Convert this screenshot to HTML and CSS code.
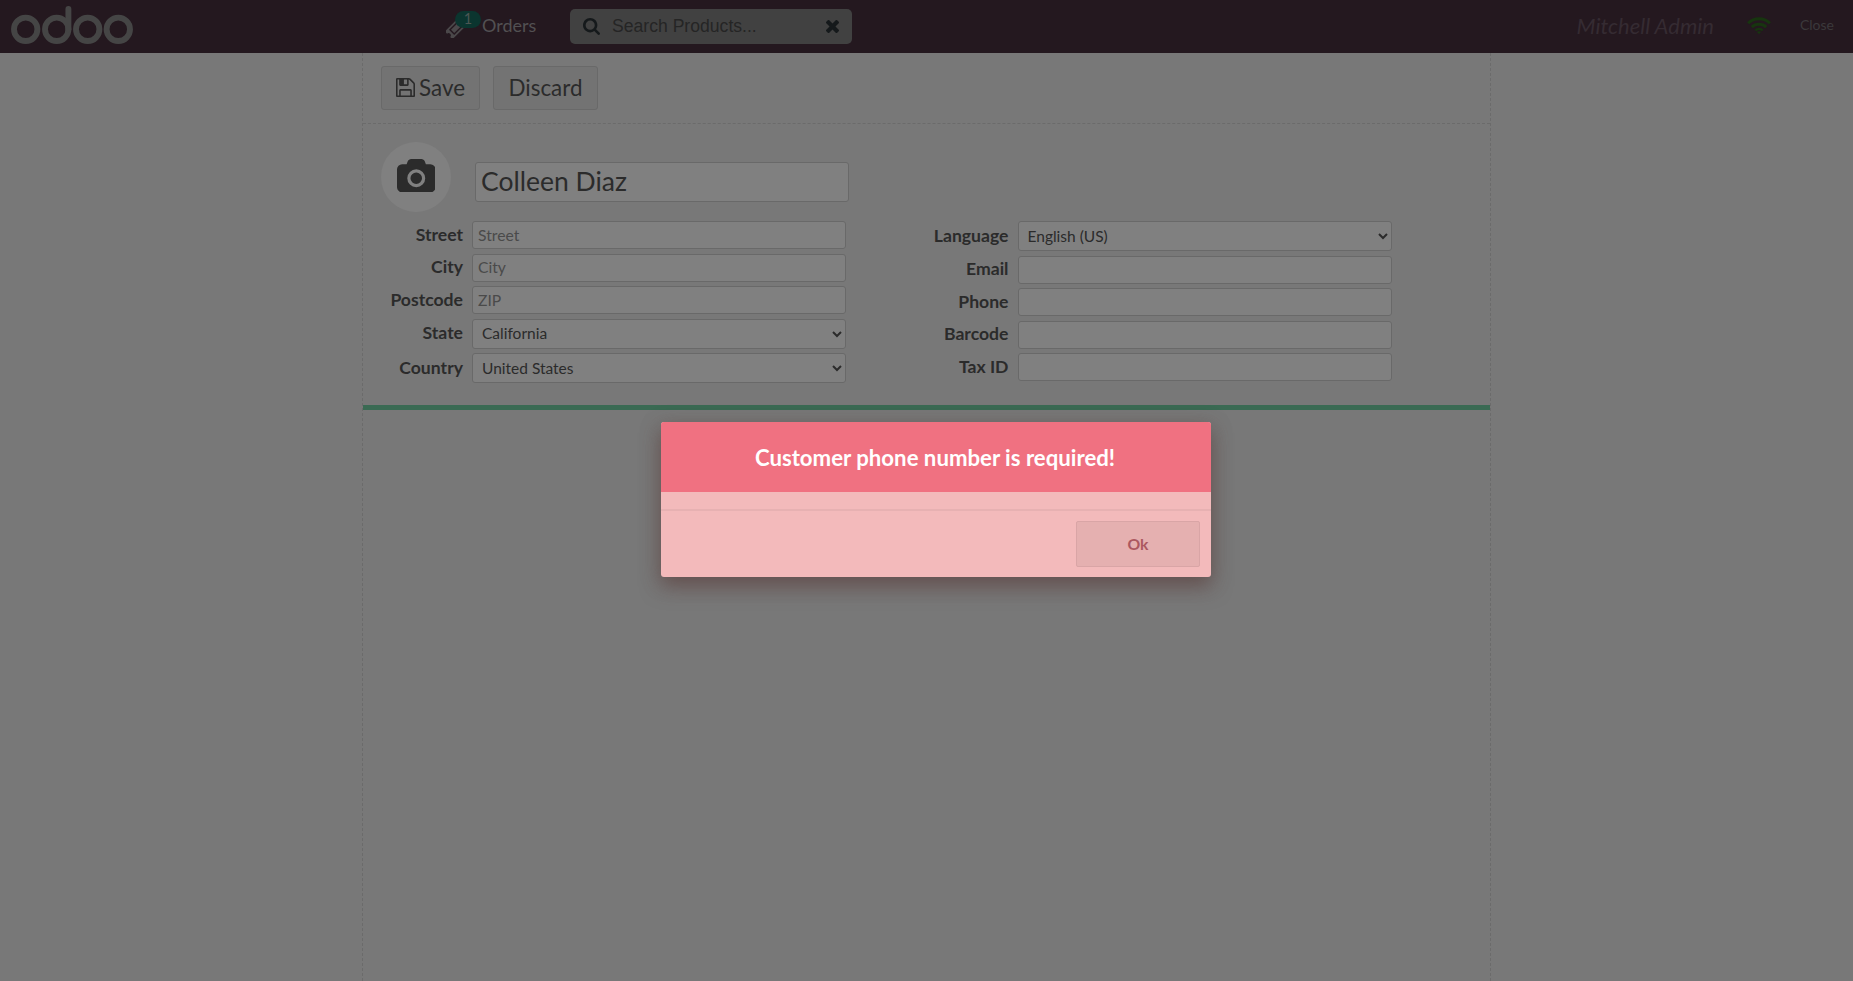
FILE: index.html
```html
<!DOCTYPE html>
<html lang="en">
<head>
<meta charset="utf-8">
<title>Point of Sale</title>
<link rel="stylesheet" href="styles.css">
</head>
<body>
<header class="topbar">
  <svg class="logo" viewBox="0 0 123 38" role="img" aria-label="odoo">
    <g fill="none" stroke="#454545" stroke-width="5.9">
      <circle cx="14.7" cy="23.3" r="11.7"/><circle cx="45.7" cy="23.3" r="11.7"/><circle cx="76.7" cy="23.3" r="11.7"/><circle cx="107.3" cy="23.3" r="11.7"/>
      <path d="M57.4 23.3V3" stroke-linecap="round"/>
    </g>
  </svg>
  <div class="orders">
    <span class="ticket">
      <svg viewBox="0 0 20 20"><g transform="rotate(-45 10 10)"><path d="M-.5 4.500h21v3.300a2.200 2.200 0 0 0 0 4.400v3.300h-21v-3.300a2.200 2.200 0 0 0 0-4.400z" fill="#4b484a"/><path d="M4.500 7h11v6h-11z" fill="none" stroke="#24181f" stroke-width="1.400"/></g></svg>
      <span class="badge">1</span>
    </span>
    <span>Orders</span>
  </div>
  <div class="search">
    <svg class="search-icon" viewBox="64 128 1664 1664"><path d="M1216 832q0-185-131.500-316.500t-316.500-131.500-316.500 131.500-131.500 316.500 131.500 316.500 316.500 131.500 316.500-131.500 131.500-316.500zm512 832q0 52-38 90t-90 38q-54 0-90-38l-343-342q-179 124-399 124-143 0-273.500-55.500t-225-150-150-225-55.500-273.500 55.500-273.500 150-225 225-150 273.500-55.500 273.500 55.500 225 150 150 225 55.500 273.500q0 220-124 399l343 343q37 37 37 90z"/></svg>
    <span class="search-text">Search Products...</span>
    <svg class="clear-icon" viewBox="302 366 1188 1188"><path d="M1490 1322q0 40-28 68l-136 136q-28 28-68 28t-68-28l-294-294-294 294q-28 28-68 28t-68-28l-136-136q-28-28-28-68t28-68l294-294-294-294q-28-28-28-68t28-68l136-136q28-28 68-28t68 28l294 294 294-294q28-28 68-28t68 28l136 136q28 28 28 68t-28 68l-294 294 294 294q28 28 28 68z"/></svg>
  </div>
  <span class="user">Mitchell Admin</span>
  <svg class="wifi" viewBox="0 0 24 17"><g fill="none" stroke="#17350f" stroke-width="3"><path d="M1.100 6.300a15.600 15.600 0 0 1 21.800 0"/><path d="M4.800 10.100a10.400 10.400 0 0 1 14.400 0"/><path d="M8.300 13.400a5.500 5.500 0 0 1 7.400 0" stroke-width="2.400"/></g><path d="M12 17.200l-2-2.100a3 3 0 0 1 4 0z" fill="#17350f"/></svg>
  <span class="close">Close</span>
</header>
<main class="screen">
  <div class="toolbar">
    <button class="btn save"><svg viewBox="128 128 1536 1536"><path d="M512 1536h768v-384h-768v384zm896 0h128v-896q0-14-10-38.500t-20-34.500l-281-281q-10-10-34-20t-39-10v416q0 40-28 68t-68 28h-576q-40 0-68-28t-28-68v-416h-128v1280h128v-416q0-40 28-68t68-28h832q40 0 68 28t28 68v416zm-384-928v-320q0-13-9.500-22.500t-22.500-9.500h-192q-13 0-22.500 9.500t-9.500 22.500v320q0 13 9.500 22.500t22.500 9.500h192q13 0 22.500-9.500t9.500-22.500zm640 32v928q0 40-28 68t-68 28h-1344q-40 0-68-28t-28-68v-1344q0-40 28-68t68-28h928q40 0 88 20t76 48l280 280q28 28 48 76t20 88z"/></svg><span>Save</span></button>
    <button class="btn discard">Discard</button>
  </div>
  <section class="details">
    <div class="identity">
      <div class="avatar"><svg viewBox="0 0 1920 1664"><path d="M960 672q119 0 203.500 84.500t84.500 203.500-84.500 203.500-203.500 84.500-203.500-84.500-84.500-203.500 84.500-203.500 203.500-84.500zm704-416q106 0 181 75t75 181v896q0 106-75 181t-181 75h-1408q-106 0-181-75t-75-181v-896q0-106 75-181t181-75h224l51-136q19-49 69.500-84.500t103.500-35.500h512q53 0 103.500 35.500t69.500 84.500l51 136h224zm-704 1152q185 0 316.500-131.500t131.500-316.500-131.500-316.500-316.500-131.500-316.500 131.500-131.500 316.500 131.500 316.500 316.500 131.500z"/></svg></div>
      <input class="field name" value="Colleen Diaz">
    </div>
    <div class="columns">
      <div class="column left">
        <label class="row"><span class="label">Street</span><input class="field" placeholder="Street"></label>
        <label class="row"><span class="label">City</span><input class="field" placeholder="City"></label>
        <label class="row"><span class="label">Postcode</span><input class="field" placeholder="ZIP"></label>
        <label class="row"><span class="label">State</span><select class="field"><option>California</option></select></label>
        <label class="row"><span class="label">Country</span><select class="field"><option>United States</option></select></label>
      </div>
      <div class="column right">
        <label class="row"><span class="label">Language</span><select class="field"><option>English (US)</option></select></label>
        <label class="row"><span class="label">Email</span><input class="field"></label>
        <label class="row"><span class="label">Phone</span><input class="field"></label>
        <label class="row"><span class="label">Barcode</span><input class="field"></label>
        <label class="row"><span class="label">Tax ID</span><input class="field"></label>
      </div>
    </div>
  </section>
</main>
<div class="popup" role="alertdialog">
  <div class="popup-title">Customer phone number is required!</div>
  <div class="popup-body"></div>
  <div class="popup-footer"><button class="ok">Ok</button></div>
</div>
</body>
</html>
```
FILE: styles.css
```css
* { box-sizing: border-box; }
body {
  margin: 0;
  height: 981px;
  display: flex;
  flex-direction: column;
  overflow: hidden;
  background: #787878;
  color: #2b2b2b;
  font-family: Lato, sans-serif;
}
button, input, select { font-family: inherit; color: inherit; }
svg { display: block; flex: none; }

.topbar {
  height: 53px;
  flex: none;
  display: flex;
  align-items: center;
  padding: 0 19px 0 11px;
  background: #24181f;
}
.logo { width: 123px; height: 38px; margin-bottom: 3px; }
.orders {
  width: 91px;
  margin-left: 312px;
  padding-bottom: 3px;
  display: flex;
  gap: 17px;
  align-items: center;
  color: #525052;
  font-size: 18px;
  line-height: 22px;
}
.ticket { position: relative; width: 19px; }
.ticket svg { width: 20px; height: 20px; margin-top: 6px; }
.badge {
  position: absolute;
  left: 9px;
  top: -1px;
  width: 26px;
  height: 17px;
  border-radius: 9px;
  background: #0b352f;
  color: #4c5653;
  font-size: 14.500px;
  line-height: 16px;
  text-align: center;
}
.search {
  width: 282px;
  height: 35px;
  margin-left: 33px;
  padding: 0 13px;
  display: flex;
  align-items: center;
  border-radius: 5px;
  background: #414141;
  fill: #15191b;
}
.search-icon { width: 17px; height: 17px; }
.search-text {
  flex: 1;
  margin-left: 12px;
  color: #252525;
  font: 17.600px "Liberation Sans", Arial, sans-serif;
}
.clear-icon { width: 13px; height: 13px; }
.user { margin-left: auto; padding-bottom: 2px; font-size: 22px; font-style: italic; color: #352b32; }
.wifi { width: 24px; height: 17px; margin: 0 29px 2px 33px; }
.close { font-size: 14px; padding-bottom: 4px; color: #3b393b; }

.screen {
  width: 1129px;
  margin-left: 362px;
  flex: 1;
  border: dashed #6b6b6b;
  border-width: 0 1px;
}
.toolbar {
  height: 71px;
  padding: 13px 18px 0;
  display: flex;
  gap: 13px;
  border-bottom: 1px dashed #6b6b6b;
}
.btn {
  height: 44px;
  padding: 0 0 2px;
  border: 1px solid #696969;
  border-radius: 3px;
  background: #737373;
  font-size: 22.400px;
  display: flex;
  align-items: center;
  justify-content: center;
  gap: 4px;
}
.save { width: 99px; }
.save svg { width: 19px; height: 19px; fill: #2b2b2b; }
.discard { width: 105px; }

.details { height: 286px; padding: 18px 18px 0; border-bottom: 5px solid #3a6a53; }
.identity { display: flex; gap: 24px; }
.avatar {
  width: 70px;
  height: 70px;
  padding-bottom: 3px;
  display: flex;
  align-items: center;
  justify-content: center;
  border-radius: 50%;
  background: #808080;
}
.avatar svg { width: 38.500px; height: 33.400px; fill: #2b2b2b; }
.field {
  width: 374px;
  height: 28px;
  margin: 0;
  padding: 0 5px 1px;
  border: 1px solid #696969;
  border-radius: 3px;
  background-color: #808080;
  font-size: 15.700px;
  outline: 0;
}
.field::placeholder { color: #4a4a4a; }
select.field { height: 30px; padding: 0 4px 1px 5px; font-size: 15.500px; }
.field.name { height: 40px; margin-top: 20px; padding-bottom: 3px; font-size: 26.500px; }
.columns { display: flex; margin-top: 9px; }
.column { width: 546px; display: flex; flex-direction: column; gap: 4.600px; }
.row { display: flex; align-items: center; gap: 9px; }
.label { width: 82px; text-align: right; font-size: 17.600px; font-weight: 700; line-height: 20px; padding-bottom: 1px; }

/* Alert dialog floating above the dimmed screen */
.popup {
  position: absolute;
  left: 661px;
  top: 422px;
  width: 550px;
  height: 155px;
  border-radius: 3px;
  overflow: hidden;
  background: #f3babb;
  box-shadow: 0 10px 20px rgba(92, 58, 58, .5), 0 4px 20px rgba(90, 75, 65, .35);
}
.popup-title {
  height: 70px;
  padding-right: 2px;
  background: #f07181;
  color: #fff;
  font-size: 22.200px;
  font-weight: 700;
  line-height: 72px;
  text-align: center;
}
.popup-body { height: 19px; border-bottom: 2px solid #e7b1b2; }
.popup-footer { display: flex; justify-content: flex-end; padding: 10px 11px 0; }
.ok {
  width: 124px;
  height: 46px;
  padding-bottom: 3px;
  border: 1px solid #d9a5a6;
  border-radius: 2px;
  background: #e5b0b0;
  color: #ac5860;
  font-size: 15.800px;
  font-weight: 700;
}
```
